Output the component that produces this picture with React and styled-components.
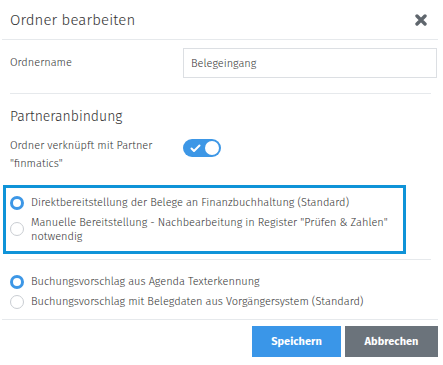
import React, { useState } from "react";
import styled, { createGlobalStyle } from "styled-components";

const Global = createGlobalStyle`
  html, body { margin: 0; padding: 0; background: #fff; }
  body { font-family: "Fira Sans", "Lato", "Noto Sans", sans-serif; color: #333; font-weight: 300; }
  * { box-sizing: border-box; }
`;

const Modal = styled.div`
  width: 436px;
  margin-left: 2px;
  background: #fff;
`;

const Header = styled.div`
  display: flex;
  align-items: center;
  justify-content: space-between;
  height: 40px;
  padding: 0 10px 0 8px;
  border-bottom: 1px solid #e6e9ec;
`;

const Title = styled.h1`
  margin: 0;
  font-size: 15px;
  font-weight: 300;
  color: #333;
  letter-spacing: 0.1px;
`;

const Close = styled.button`
  border: 0;
  background: none;
  padding: 0;
  width: 14px;
  height: 14px;
  display: flex;
  align-items: center;
  justify-content: center;
  cursor: pointer;
`;

const Body = styled.div`
  padding: 0 0 0 8px;
`;

const FieldRow = styled.div`
  display: grid;
  grid-template-columns: 173px 1fr;
  align-items: center;
  padding: 8px 0 15px;
  border-bottom: 1px solid #e6e9ec;
  margin-right: 7px;
`;

const Label = styled.label`
  font-size: 11px;
  line-height: 18px;
  color: #333;
`;

const Input = styled.input`
  height: 30px;
  width: 254px;
  border: 1px solid #dcdfe3;
  padding: 0 7px;
  font: inherit;
  font-size: 11px;
  color: #333;
  outline: none;
`;

const SectionTitle = styled.h2`
  margin: 0;
  padding-top: 14px;
  font-size: 14px;
  font-weight: 300;
  line-height: 18px;
  color: #333;
`;

const ToggleRow = styled.div`
  display: grid;
  grid-template-columns: 173px 1fr;
  align-items: start;
  padding-top: 11px;
`;

const Toggle = styled.div`
  margin-top: 2px;
  width: 38px;
  height: 18px;
  border-radius: 9px;
  background: #3d97e6;
  display: flex;
  align-items: center;
  justify-content: space-between;
  padding: 0 2px 0 7px;
`;

const Knob = styled.span`
  width: 14px;
  height: 14px;
  border-radius: 50%;
  background: #fff;
`;

const HighlightBox = styled.div`
  margin: 12px 0 0 -7px;
  width: 403px;
  border: 3px solid #0f93d8;
  padding: 8px 5px 7px 4px;
  display: flex;
  flex-direction: column;
  gap: 6px;
`;

const RadioGroup = styled.div`
  display: flex;
  flex-direction: column;
  gap: 6px;
  margin: 5px 7px 0 0;
  padding: 15px 0 0 0;
  border-top: 1px solid #e6e9ec;
`;

const RadioRow = styled.label`
  display: flex;
  align-items: ${(p) => (p.$multi ? "flex-start" : "center")};
  gap: 7px;
  font-size: 11px;
  line-height: 14px;
  color: #333;
  cursor: pointer;
`;

const Circle = styled.span`
  flex: none;
  width: 14px;
  height: 14px;
  border-radius: 50%;
  border: ${(p) => (p.$on ? "3px solid #3d97e6" : "1px solid #c9cdd2")};
  background: #fff;
  margin-top: ${(p) => (p.$multi ? "6px" : "0")};
`;

const Footer = styled.div`
  margin-top: 10px;
  border-top: 1px solid #e6e9ec;
  display: flex;
  justify-content: flex-end;
  gap: 4px;
  padding-top: 6px;
`;

const Button = styled.button`
  height: 31px;
  width: ${(p) => p.$w}px;
  border: 0;
  background: ${(p) => (p.$primary ? "#3a96e8" : "#6b737b")};
  color: #fff;
  font: inherit;
  font-size: 11px;
  font-weight: 700;
  cursor: pointer;
`;

function Radio({ on, multi, children }) {
  return (
    <RadioRow $multi={multi}>
      <Circle $on={on} $multi={multi} />
      <span>{children}</span>
    </RadioRow>
  );
}

export default function App() {
  const [name, setName] = useState("Belegeingang");
  return (
    <>
      <Global />
      <Modal>
        <Header>
          <Title>Ordner bearbeiten</Title>
          <Close aria-label="Schließen">
            <svg width="12" height="12" viewBox="0 0 12 12">
              <path d="M2 2 L10 10 M10 2 L2 10" stroke="#5f666d" strokeWidth="3.4" strokeLinecap="round" />
            </svg>
          </Close>
        </Header>
        <Body>
          <FieldRow>
            <Label>Ordnername</Label>
            <Input value={name} onChange={(e) => setName(e.target.value)} />
          </FieldRow>
          <SectionTitle>Partneranbindung</SectionTitle>
          <ToggleRow>
            <Label>
              Ordner verknüpft mit Partner
              <br />
              "finmatics"
            </Label>
            <Toggle>
              <svg width="11" height="9" viewBox="0 0 11 9">
                <path d="M1.5 4.5 L4 7 L9.5 1.5" stroke="#fff" strokeWidth="2" fill="none" strokeLinecap="round" strokeLinejoin="round" />
              </svg>
              <Knob />
            </Toggle>
          </ToggleRow>
          <HighlightBox>
            <Radio on>Direktbereitstellung der Belege an Finanzbuchhaltung (Standard)</Radio>
            <Radio multi>
              Manuelle Bereitstellung - Nachbearbeitung in Register "Prüfen &amp; Zahlen"
              <br />
              notwendig
            </Radio>
          </HighlightBox>
          <RadioGroup>
            <Radio on>Buchungsvorschlag aus Agenda Texterkennung</Radio>
            <Radio>Buchungsvorschlag mit Belegdaten aus Vorgängersystem (Standard)</Radio>
          </RadioGroup>
        </Body>
        <Footer>
          <Button $primary $w={89}>Speichern</Button>
          <Button $w={93}>Abbrechen</Button>
        </Footer>
      </Modal>
    </>
  );
}
